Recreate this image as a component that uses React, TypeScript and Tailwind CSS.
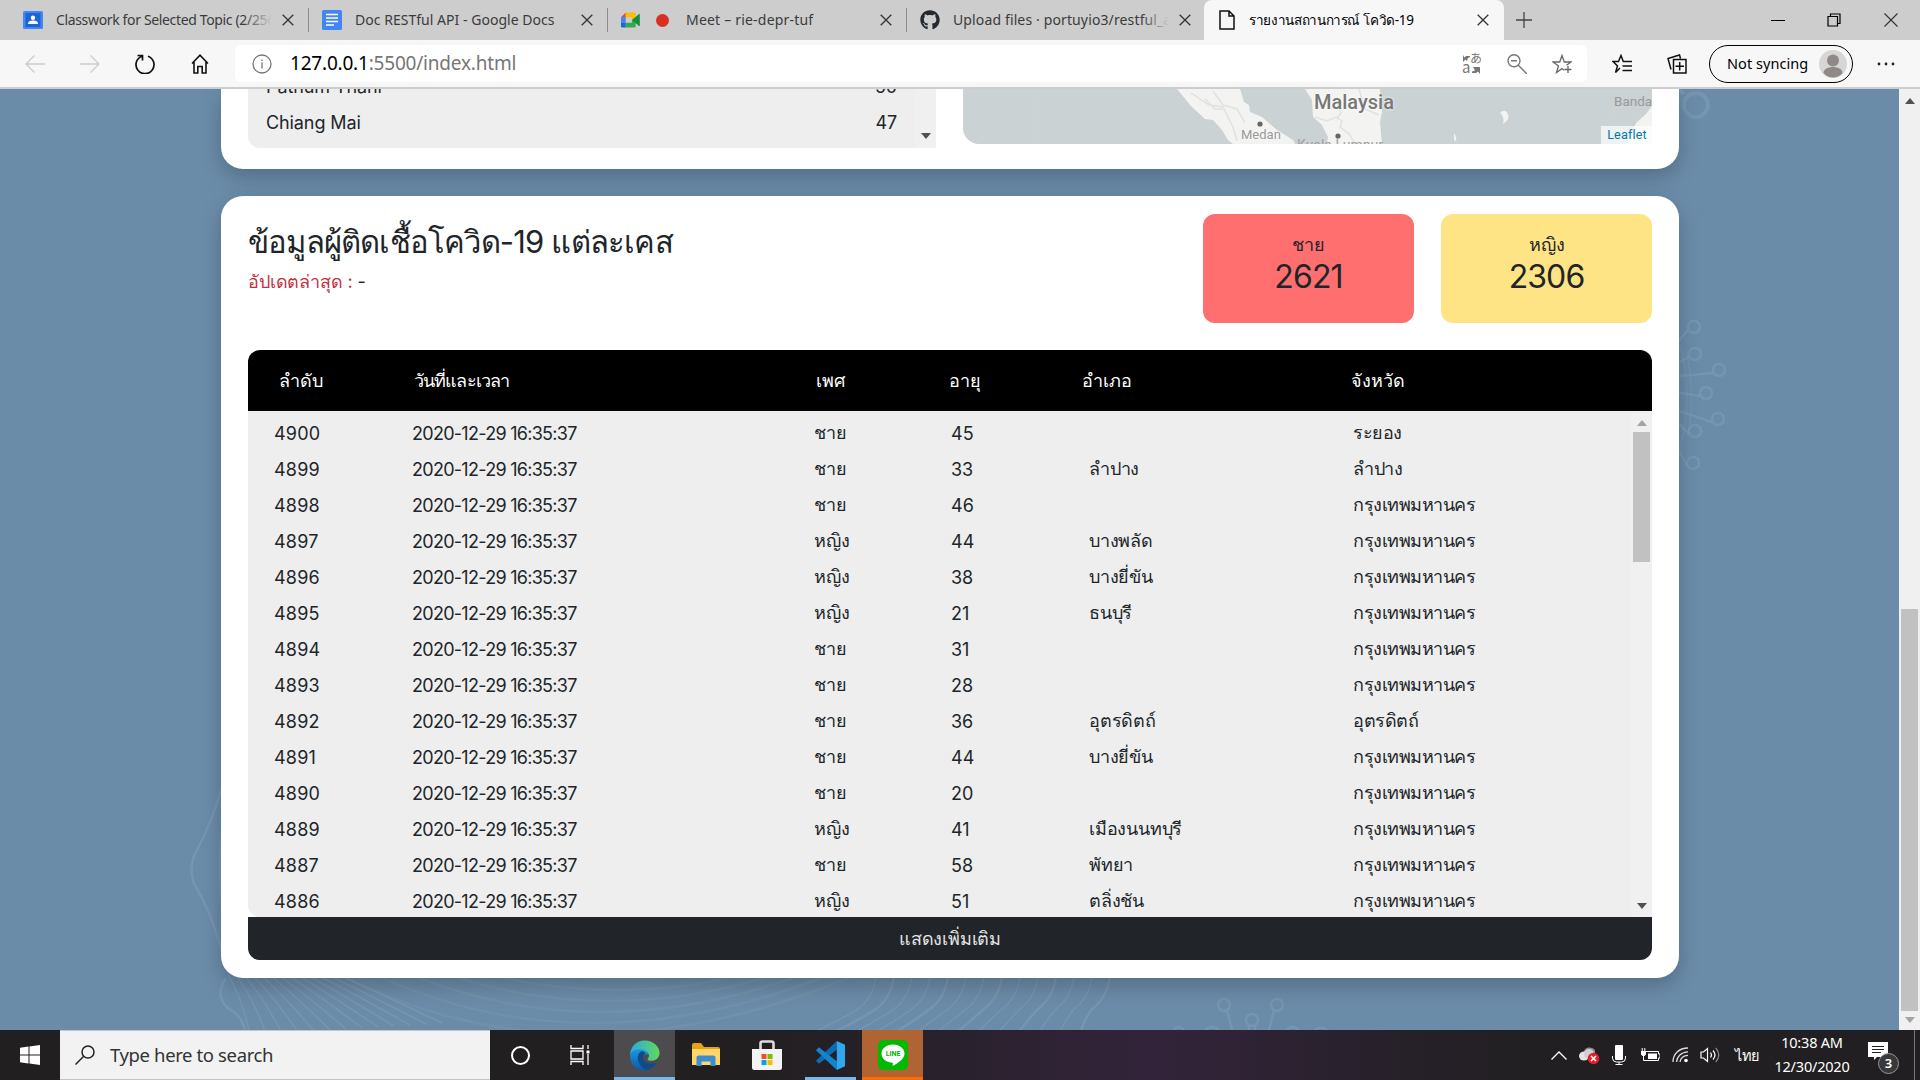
import React from "react";
import { FaGithub } from "react-icons/fa";

const ui = "font-['Noto_Sans','Open_Sans',sans-serif]";
const body = "font-['Inter','Noto_Sans',sans-serif]";

const rows: string[][] = [
  ["4900", "ชาย", "45", "", "ระยอง"],
  ["4899", "ชาย", "33", "ลำปาง", "ลำปาง"],
  ["4898", "ชาย", "46", "", "กรุงเทพมหานคร"],
  ["4897", "หญิง", "44", "บางพลัด", "กรุงเทพมหานคร"],
  ["4896", "หญิง", "38", "บางยี่ขัน", "กรุงเทพมหานคร"],
  ["4895", "หญิง", "21", "ธนบุรี", "กรุงเทพมหานคร"],
  ["4894", "ชาย", "31", "", "กรุงเทพมหานคร"],
  ["4893", "ชาย", "28", "", "กรุงเทพมหานคร"],
  ["4892", "ชาย", "36", "อุตรดิตถ์", "อุตรดิตถ์"],
  ["4891", "ชาย", "44", "บางยี่ขัน", "กรุงเทพมหานคร"],
  ["4890", "ชาย", "20", "", "กรุงเทพมหานคร"],
  ["4889", "หญิง", "41", "เมืองนนทบุรี", "กรุงเทพมหานคร"],
  ["4887", "ชาย", "58", "พัทยา", "กรุงเทพมหานคร"],
  ["4886", "หญิง", "51", "ตลิ่งชัน", "กรุงเทพมหานคร"],
];

function Cross({ className = "" }: { className?: string }) {
  return (
    <svg viewBox="0 0 12 12" className={"h-3 w-3 shrink-0 " + className} fill="none" stroke="#333" strokeWidth="1.3">
      <path d="M.7.7l10.6 10.6M11.3.7L.7 11.3" />
    </svg>
  );
}

function Arrow({ up = false, color = "#505050" }: { up?: boolean; color?: string }) {
  return (
    <svg viewBox="0 0 10 6" className="h-1.5 w-2.5 shrink-0" fill={color}>
      <path d={up ? "M0 6L5 0l5 6z" : "M0 0h10L5 6z"} />
    </svg>
  );
}

interface TabProps {
  icon: React.ReactNode;
  title: string;
  last?: boolean;
  fade?: boolean;
  width?: string;
  textClass: string;
}

function Tab({ icon, title, last = false, fade = false, width = "w-[299px] pl-[13px]", textClass }: TabProps) {
  return (
    <div className={"flex h-full shrink-0 items-center " + width}>
      <div className="flex items-center">{icon}</div>
      <div className="relative ml-[13px] min-w-0 flex-1 overflow-hidden">
        <div className={"whitespace-nowrap text-[14px] leading-6 text-[#3b3b3b] " + textClass}>{title}</div>
        {fade && <div className="absolute inset-y-0 right-0 w-7 bg-gradient-to-r from-transparent to-[#cdcdcd]" />}
      </div>
      <Cross className="mr-3.5 ml-2.5" />
      <div className={"h-6 w-px " + (last ? "bg-transparent" : "bg-[#8b8b8b]")} />
    </div>
  );
}

function TabBar() {
  return (
    <div className="flex h-10 items-stretch bg-[#cdcdcd]">
      <Tab
        fade
        width="w-[309px] pl-[23px]"
        textClass="tracking-[-0.35px]"
        title="Classwork for Selected Topic (2/2563)"
        icon={
          <svg viewBox="0 0 20 18" className="h-[18px] w-5" preserveAspectRatio="none">
            <rect width="20" height="18" rx="1.5" fill="#4285f4" />
            <rect x="2.5" y="2" width="15" height="14" fill="#1967d2" />
            <circle cx="10" cy="6.7" r="2.2" fill="#fff" />
            <path d="M5 13c0-3 2.500-3.500 5-3.500s5 .5 5 3.500z" fill="#fff" />
          </svg>
        }
      />
      <Tab
        textClass="tracking-[0.03px]"
        title="Doc RESTful API - Google Docs"
        icon={
          <svg viewBox="0 0 20 20" className="h-5 w-5">
            <rect width="20" height="20" rx="1.5" fill="#4285f4" />
            <path d="M4 4.500h12M4 8h12M4 11.500h12M4 15h8" stroke="#fff" strokeWidth="1.7" />
          </svg>
        }
      />
      <Tab
        textClass="tracking-[0.2px]"
        title="Meet – rie-depr-tuf"
        icon={
          <div className="mr-1 flex items-center gap-4">
            <svg viewBox="0 0 20 16" className="h-4 w-[19px]">
              <path d="M0 5L5 0v5z" fill="#ea4335" />
              <path d="M5 0h9q1.500 0 1.500 1.500V6l-4 3V5H5z" fill="#fbbc04" />
              <path d="M0 5h5v6H0z" fill="#4285f4" />
              <path d="M0 11h5v5H1.500Q0 16 0 14.500z" fill="#1967d2" />
              <path d="M5 11h6.500V8l4 1.500v5q0 1.500-1.500 1.500H5z" fill="#34a853" />
              <path d="M11.500 8L19 1.800q.8-.5.8.5v11.400q0 1-.8.5z" fill="#12903c" />
            </svg>
            <div className="h-[13px] w-[13px] rounded-full bg-[#d93025]" />
          </div>
        }
      />
      <Tab
        last
        fade
        textClass="tracking-[0.13px]"
        title="Upload files · portuyio3/restful_api"
        icon={<FaGithub className="h-[20px] w-5 text-[#24292e]" />}
      />
      <div className="-ml-0.5 flex h-full w-[300px] shrink-0 items-center rounded-t-lg bg-[#f7f7f7] pr-[15px] pl-[15px]">
        <svg viewBox="0 0 16 20" className="h-5 w-4" fill="none" stroke="#111" strokeWidth="1.5">
          <path d="M1 1h9l5 5v13H1zM10 1v5h5" />
        </svg>
        <span className="ml-3.5 flex-1 whitespace-nowrap text-[13.5px] leading-6 text-black tracking-[-0.35px]">รายงานสถานการณ์ โควิด-19</span>
        <Cross />
      </div>
      <div className="flex flex-1 items-center pl-3">
        <svg viewBox="0 0 16 16" className="h-4 w-4" stroke="#444" strokeWidth="1.3">
          <path d="M8 0v16M0 8h16" />
        </svg>
      </div>
      <div className="flex items-center pr-[22px]">
        <div className="h-px w-3.5 bg-black" />
        <svg viewBox="0 0 14 14" className="ml-[42px] h-3.5 w-3.5" fill="none" stroke="#000" strokeWidth="1.2">
          <path d="M1 3.500h9.500V13H1zM3.500 3V1H13v9.500h-2" />
        </svg>
        <svg viewBox="0 0 14 14" className="ml-[43px] h-3.5 w-3.5" stroke="#333" strokeWidth="1.100">
          <path d="M.5.5l13 13M13.500.5l-13 13" />
        </svg>
      </div>
    </div>
  );
}

function Toolbar() {
  return (
    <div className="flex h-[49px] items-center border-b-2 border-[#cdcdcd] bg-[#f7f7f7]">
      <div className="flex w-[235px] shrink-0 items-center gap-[35px] pl-[25px]">
        <svg viewBox="0 0 20 18" className="h-[18px] w-5" fill="none" stroke="#ccc" strokeWidth="1.3">
          <path d="M20 9H1M9.500.5L1 9l8.500 8.500" />
        </svg>
        <svg viewBox="0 0 20 18" className="h-[18px] w-5" fill="none" stroke="#ccc" strokeWidth="1.3">
          <path d="M0 9h19M10.500.5L19 9l-8.500 8.500" />
        </svg>
        <svg viewBox="0 0 20 20" className="h-5 w-5" fill="none" stroke="#111" strokeWidth="1.700">
          <path d="M7 2.200A9 9 0 1 0 13 2.200M2.500 1.500H7.500V6.500" />
        </svg>
        <svg viewBox="0 0 18 20" className="ml-px h-5 w-[18px]" fill="none" stroke="#111" strokeWidth="1.600">
          <path d="M1 9.500L9 1.200l8 8.300M3 8v11h3.800v-6.500h4.400V19H15V8" />
        </svg>
      </div>
      <div className="flex h-[37px] w-[1352px] shrink-0 items-center rounded-md bg-white pr-[15px] pl-[17px]">
        <svg viewBox="0 0 20 20" className="h-5 w-5" fill="none" stroke="#767676" strokeWidth="1.300">
          <circle cx="10" cy="10" r="9" />
          <path d="M10 8.500V14.500M10 5.500v1.600" />
        </svg>
        <span className="ml-[18px] flex-1 -translate-y-px whitespace-nowrap text-[19px] leading-7 tracking-[-0.2px] text-[#767676]">
          <span className="text-black">127.0.0.1</span>:5500/index.html
        </span>
        <div className="flex items-center gap-[25px]">
          <div className="relative h-5 w-5 font-['Noto_Sans_CJK_JP',sans-serif] text-[#767676]">
            <span className="absolute -top-1 left-2 text-[12px] leading-4">あ</span>
            <span className="absolute top-[5px] left-0 text-[15px] leading-4">a</span>
            <svg viewBox="0 0 20 20" className="absolute inset-0 h-5 w-5" fill="#767676">
              <path d="M1 1v7l2.500-2.500L5 7l1-3 2-1V2H4L2.500 3.500z M11 13h7v7l-2-2.500-2 1.500-4 0v-1.500l3-1z" />
            </svg>
          </div>
          <svg viewBox="0 0 20 20" className="h-5 w-5" fill="none" stroke="#767676" strokeWidth="1.400">
            <circle cx="7" cy="6.800" r="6" />
            <path d="M11.300 11.300L20 20M4 6.800h6" />
          </svg>
          <svg viewBox="0 0 20 20" className="h-5 w-5" fill="none" stroke="#666" strokeWidth="1.300">
            <path d="M12 16.200l-2-1.600-5.500 3.900 2-6.500L1 8h6.700L10 1.500 12.300 8H19l-4.500 3.300M16 12v7M12.500 15.500h7" />
          </svg>
        </div>
      </div>
      <svg viewBox="0 0 20 20" className="ml-[25px] h-5 w-5" fill="none" stroke="#111" strokeWidth="1.500">
        <path d="M8 14l-4.500 4.500L5.500 12 1 7.500h5.500L9 1.500l2.300 6H20M10.500 12H20M10.500 16.500H20" />
      </svg>
      <svg viewBox="0 0 20 20" className="ml-[35px] h-5 w-5" fill="none" stroke="#111" strokeWidth="1.500">
        <path d="M4 15.500L1 4.500 12.500 1l1 3.500M6.500 5.500H19V19H6.500zM12.700 8v8.500M8.500 12.200h8.500" />
      </svg>
      <div className="ml-[22px] flex h-[38px] w-[144px] items-center justify-between rounded-full border-[1.5px] border-black pr-[5px] pl-[17px]">
        <span className="whitespace-nowrap text-[14.5px] tracking-[0.05px] text-black">Not syncing</span>
        <svg viewBox="0 0 28 28" className="h-7 w-7">
          <circle cx="14" cy="14" r="14" fill="#d8d6d4" />
          <circle cx="14" cy="10.500" r="6" fill="#8f8a87" />
          <path d="M4.500 23c0-8 19-8 19 0-5 6-14 6-19 0z" fill="#8f8a87" />
        </svg>
      </div>
      <svg viewBox="0 0 18 4" className="ml-6 h-1 w-[18px]" fill="#222">
        <circle cx="2" cy="2" r="1.400" />
        <circle cx="9" cy="2" r="1.400" />
        <circle cx="16" cy="2" r="1.400" />
      </svg>
    </div>
  );
}

const knobs = [
  [1694, 238], [1695, 265], [1719, 281], [1706, 304], [1718, 330], [1695, 342], [1693, 374],
];

function Backdrop() {
  return (
    <svg viewBox="0 0 1899 941" className="absolute inset-0 h-full w-full" fill="none" stroke="#86a3bc" strokeWidth="2.500" strokeOpacity=".4">
      <circle cx="1696" cy="16" r="12" strokeWidth="4" />
      <path d="M1684 5l-12-10" strokeWidth="4" />
      {knobs.map(([x, y]) => (
        <g key={y}>
          <circle cx={x} cy={y} r="6" />
          <path d={`M${x - 6} ${y + 3}L1672 ${y + (300 - y) * 0.35}`} />
        </g>
      ))}
      <path d="M1680 255q14 50 0 105M1686 262q10 40 2 85" strokeOpacity=".2" />
      <path d="M224 692q-12 42-30 75-5 14 0 28 16 24 30 75M224 730q-8 40 0 110" />
      <path d="M226 889q-14 22 8 34q10 8 12 24" />
      {Array.from({ length: 13 }, (_, i) => (
        <path key={i} strokeWidth="1.500" d={`M${228 + i * 7} ${886 - i}q${14 + i * 3} 22 ${22 + i * 9} 60`} />
      ))}
      {Array.from({ length: 7 }, (_, i) => (
        <path key={i} strokeOpacity=".22" d={`M${330 + i * 34} 880Q${570 + i * 12} ${1010 - i * 22} ${870 - i * 26} 880`} />
      ))}
      {Array.from({ length: 14 }, (_, i) => (
        <path key={i} strokeWidth={i % 3 ? 1.4 : 2.5} d={`M${1110 - i * 18} 886q-2 22-18 34-${10 + i} 14-${12 + i * 3} 26`} />
      ))}
      <circle cx="1224" cy="916" r="6" />
      <circle cx="1277" cy="916" r="6" />
      <circle cx="1252" cy="931" r="6" />
      <path d="M1227 922l6 22M1274 922l-6 22M1249 937v6M1255 937v6M1174 941q4-6 10 0M1205 941q8-6 14 0M1287 941q5-6 12 0M1315 941q6-5 12 0" />
    </svg>
  );
}

function MapView() {
  return (
    <div className="relative h-[55px] w-[689px] overflow-hidden rounded-bl-2xl bg-[#cad2d3] font-['Roboto',sans-serif]">
      <svg viewBox="0 0 689 55" className="absolute inset-0 h-full w-full">
        <path fill="#f3f4f2" d="M214 0h63l4 13 5 3 1 7 12 5 15 13 16 10 2 4h-62l-5-4-6-10-9-10-8-1-14-13zM342 0h75l2 23-2 10 2 22h-55l1-7-6-12-9-8-1-17z" />
        <path fill="none" stroke="#e0e2e0" strokeWidth="1.500" d="M228 4l18 12 14 2 10 20 4 14M250 2l10 14 14 4 8 14M352 28l12 4 9-4 6 4-2 6 10 8 5 9M374 14l4 10-4 6M396 0l6 20 14 6M242 10l10 10 8 0" />
        <path fill="#f3f4f2" d="M537 24q5-5 8 1 2 6-5 10 2-7-3-11zM491 44q3 4 2 8l-2-1zM689 17l-6 8-10 9-10 21h26z" />
        <path stroke="#d0d7d8" strokeWidth=".7" d="M75 0v55M651 0v34" />
        <circle cx="297" cy="35" r="2.600" fill="#666" />
        <circle cx="375" cy="47" r="2.600" fill="#666" />
      </svg>
      <span className="absolute -top-[5px] left-[351px] text-[20px] leading-9 font-medium text-[#777] [text-shadow:0_0_3px_white]">Malaysia</span>
      <span className="absolute top-[38px] left-[278px] text-[13px] leading-4 text-[#999] [text-shadow:0_0_3px_white]">Medan</span>
      <span className="absolute top-[48px] left-[334px] whitespace-nowrap text-[14px] leading-4 text-[#a0a0a0]">Kuala Lumpur</span>
      <span className="absolute top-1 left-[651px] text-[13.5px] leading-4 text-[#999]">Banda</span>
      <div className="absolute right-0 bottom-0 h-[18px] w-[51px] bg-white/70 pl-px text-center text-[12.5px] leading-[17px] tracking-[0.2px] text-[#0078a8]">Leaflet</div>
    </div>
  );
}

function TopCard() {
  return (
    <section className="flex h-20 items-start gap-[27px] rounded-b-[22px] bg-white px-[27px] shadow-[0_8px_22px_rgba(0,0,0,0.22)]">
      <div className="flex h-[59px] w-[688px] overflow-hidden rounded-bl-xl bg-[#eee]">
        <div className="flex flex-1 flex-col justify-end pr-[18px] pb-[7px] pl-[18px] text-[18px] leading-9 tracking-[-0.1px]">
          <div className="flex h-9 shrink-0 justify-between"><span>Pathum Thani</span><span>50</span></div>
          <div className="flex h-9 shrink-0 justify-between"><span>Chiang Mai</span><span>47</span></div>
        </div>
        <div className="flex w-[21px] items-end justify-center bg-[#f0f0f0] pb-[9px]"><Arrow /></div>
      </div>
      <MapView />
    </section>
  );
}

function Stat({ label, value, className }: { label: string; value: string; className: string }) {
  return (
    <div className={"flex h-[109px] w-[211px] flex-col items-center rounded-xl pt-[19px] " + className}>
      <span className="h-6 text-[18px] leading-6">{label}</span>
      <span className="text-[32px] leading-10 tracking-[-0.9px]">{value}</span>
    </div>
  );
}

function CasesCard() {
  return (
    <section className="mt-[27px] flex h-[782px] flex-col rounded-[22px] bg-white px-[27px] pt-[18px] shadow-[0_8px_22px_rgba(0,0,0,0.22)]">
      <div className="flex h-[136px] items-start">
        <div className="flex-1">
          <h1 className="h-[50px] whitespace-nowrap pt-1 text-[31px] leading-[48px] tracking-[-0.8px]">ข้อมูลผู้ติดเชื้อโควิด-19 แต่ละเคส</h1>
          <p className="text-[18px] leading-9 tracking-[-0.15px]"><span className="text-[#c5303f]">อัปเดตล่าสุด : </span>-</p>
        </div>
        <div className="flex gap-[27px]">
          <Stat label="ชาย" value="2621" className="bg-[#ff6f70]" />
          <Stat label="หญิง" value="2306" className="bg-[#ffe485]" />
        </div>
      </div>
      <div className="grid h-[61px] grid-cols-[135px_402px_133px_133px_269px_1fr] items-center rounded-t-xl bg-black pl-[31px] text-[18px] text-white">
        <span>ลำดับ</span>
        <span className="tracking-[-0.9px]">วันที่และเวลา</span>
        <span>เพศ</span>
        <span>อายุ</span>
        <span>อำเภอ</span>
        <span>จังหวัด</span>
      </div>
      <div className="flex h-[506px] overflow-hidden rounded-bl-xl bg-[#eee]">
        <div className="flex-1 pt-1 pl-[26px] text-[18px] leading-9">
          {rows.map(([id, sex, age, district, province]) => (
            <div key={id} className="grid h-9 grid-cols-[138px_402px_137px_138px_264px_1fr] whitespace-nowrap">
              <span className="translate-y-px tracking-[0.2px]">{id}</span>
              <span className="translate-y-px tracking-[-0.72px]">2020-12-29 16:35:37</span>
              <span>{sex}</span>
              <span className="translate-y-px">{age}</span>
              <span className="tracking-[-0.2px]">{district}</span>
              <span className="tracking-[-0.5px]">{province}</span>
            </div>
          ))}
        </div>
        <div className="flex w-[21px] flex-col items-center bg-[#f0f0f0] pt-[9px] pb-2">
          <Arrow up color="#a3a3a3" />
          <div className="mt-1.5 h-[130px] w-[17px] bg-[#c1c1c1]" />
          <div className="flex-1" />
          <Arrow />
        </div>
      </div>
      <button className="h-[43px] rounded-b-xl bg-[#212529] text-[18px] font-light tracking-[-0.2px] text-[#e4e4e4]">แสดงเพิ่มเติม</button>
    </section>
  );
}

function Taskbar() {
  return (
    <div className="flex h-[50px] items-stretch bg-gradient-to-r from-[#221f21] from-40% via-[#32233a] via-60% to-[#211f21] to-80% text-white">
      <div className="flex w-[60px] items-center justify-center">
        <svg viewBox="0 0 20 20" className="h-5 w-5" fill="#fff">
          <path d="M0 2.800L8.500 1.500v8H0zM9.500 1.400L20 0v9.500H9.500zM0 10.500h8.500v8L0 17.200zM9.500 10.500H20V20L9.500 18.600z" />
        </svg>
      </div>
      <div className="flex w-[430px] items-center border-y border-[#c4c4c4] bg-[#f2f2f2] pl-[15px]">
        <svg viewBox="0 0 20 20" className="h-5 w-5" fill="none" stroke="#222" strokeWidth="1.500">
          <circle cx="13" cy="7" r="6" />
          <path d="M8.700 11.300L.5 19.500" />
        </svg>
        <span className="ml-[15px] text-[18.500px] tracking-[-0.38px] text-[#333]">Type here to search</span>
      </div>
      <div className="flex w-[60px] items-center justify-center">
        <div className="h-[19px] w-[19px] rounded-full border-[2.5px] border-white" />
      </div>
      <div className="flex w-[64px] items-center justify-center pr-1">
        <svg viewBox="0 0 20 20" className="h-5 w-5" fill="none" stroke="#fff" strokeWidth="1.300">
          <path d="M1 0v3.500h12V0M1 6h12v8H1zM1 20v-3.500h12V20M18 0v4M18 9v11" />
          <path d="M18 5.500v3" strokeWidth="3" />
        </svg>
      </div>
      <div className="flex w-[61px] items-center justify-center border-b-[3px] border-[#76b9ed] bg-[#4d4b4d] pt-[3px]">
        <svg viewBox="0 0 32 32" className="h-[31px] w-[31px]">
          <defs>
            <linearGradient id="eg" x1="0" x2="1"><stop offset="0" stopColor="#2aa7e8" /><stop offset="1" stopColor="#62d957" /></linearGradient>
            <linearGradient id="eb" x1="0" x2="0" y1="0" y2="1"><stop offset="0" stopColor="#1b9de2" /><stop offset="1" stopColor="#0c59a4" /></linearGradient>
          </defs>
          <path fill="url(#eb)" d="M1 16C1 10 6 7 12 8c5 1 8 3 8 7-4-1-7 2-5 6 2 4 9 6 14 2-2 5-8 9-14 8.500C7 31 1 25 1 16z" />
          <path fill="#114a8b" d="M12 12c-5 3-4 14 6 19 5-1 9-4 11-8-6 3-12 1-14-3-1-3 0-5 2-6-1-2-3-3-5-2z" />
          <path fill="url(#eg)" d="M1 15C2 6 8 .5 16 .5c9 0 15.500 6 15.500 13 0 5-4 8-8 8-3 0-5-1-4-2.500 3-3 0-9-8-9.500C6 9.300 2 12 1 15z" />
        </svg>
      </div>
      <div className="flex w-[61px] items-center justify-center">
        <svg viewBox="0 0 28 24" className="h-6 w-7">
          <path d="M0 2q0-2 2-2h7l3 4h14q2 0 2 2v16H0z" fill="#e2a316" />
          <path d="M0 6h28v16H0z" fill="#ffd667" />
          <path d="M4.500 23V14.500q0-2 2-2h15q2 0 2 2V23h-5v-4.500h-9V23z" fill="#3d8ed0" />
        </svg>
      </div>
      <div className="flex w-[62px] items-center justify-center">
        <svg viewBox="0 0 30 30" className="h-[31px] w-[30px]">
          <path d="M8.500 10V3q0-2 2-2h9q2 0 2 2v7" fill="none" stroke="#ddd" strokeWidth="2.600" />
          <path d="M0 8.500h30V27q0 2.500-2.500 2.500h-25Q0 29.500 0 27z" fill="#f3f3f3" />
          <path d="M9.500 13.500h5v5h-5z" fill="#f25022" /><path d="M15.500 13.500h5v5h-5z" fill="#7fba00" />
          <path d="M9.500 19.500h5v5h-5z" fill="#00a4ef" /><path d="M15.500 19.500h5v5h-5z" fill="#ffb900" />
        </svg>
      </div>
      <div className="flex w-[64px] items-end justify-center">
        <div className="flex h-full w-[51px] items-center justify-center border-b-[3px] border-[#76b9ed] pt-[3px]">
          <svg viewBox="0 0 32 32" className="h-[31px] w-[31px]">
            <path d="M22.500 1v9L4 24.500 1 21.500z" fill="#0b6cb5" />
            <path d="M22.500 31v-9L4 7.500 1 10.500z" fill="#1385d0" />
            <path d="M22.500 1L31 5v22l-8.500 4z" fill="#31a8ee" />
          </svg>
        </div>
      </div>
      <div className="flex w-[61px] items-center justify-center border-b-[3px] border-[#ff6a00] bg-[#b06433] pt-[3px]">
        <svg viewBox="0 0 30 30" className="h-[30px] w-[30px]">
          <rect width="30" height="30" rx="5" fill="#00b900" />
          <path d="M15 4.500c6.500 0 11.500 4 11.500 9 0 4.500-4.500 8.500-11 12-.8.400-1 0-.9-.8l.3-2C8.500 22.500 3.500 19 3.500 13.500c0-5 5-9 11.500-9z" fill="#fff" />
          <text x="15" y="16" textAnchor="middle" fontSize="7" fontWeight="700" fontFamily="Roboto, sans-serif" fill="#00b900">LINE</text>
        </svg>
      </div>
      <div className="flex-1" />
      <div className="flex items-center">
        <svg viewBox="0 0 16 9" className="h-[9px] w-4" fill="none" stroke="#fff" strokeWidth="1.300"><path d="M.5 8.500L8 1l7.500 7.500" /></svg>
        <svg viewBox="0 0 21 19" className="ml-3 h-[19px] w-[21px]">
          <path d="M5 5a6 5 0 0 1 11-1v9H4z" fill="#8d8b8d" /><ellipse cx="5" cy="10" rx="5" ry="4.500" fill="#e4e4e4" /><ellipse cx="10" cy="8" rx="5" ry="5" fill="#d1d1d1" />
          <circle cx="14.500" cy="12.500" r="5.800" fill="#e01f2d" /><path d="M12 10l5 5M17 10l-5 5" stroke="#fff" strokeWidth="1.600" />
        </svg>
        <svg viewBox="0 0 14 20" className="ml-3 h-5 w-3.5" fill="#fff">
          <rect x="3" width="8" height="15" rx="1" /><path d="M.5 11v2q0 4 4 4h5q4 0 4-4v-2M7 17v2.500M3.500 19.500h7" fill="none" stroke="#fff" />
        </svg>
        <svg viewBox="0 0 20 14" className="ml-[14px] h-3.5 w-5" fill="#fff">
          <path d="M4 3.500h14.500V6H20v4h-1.500v2.500H7" fill="none" stroke="#fff" /><path d="M8 5.500h9v5.500H8zM1 3h5v3.500L4.500 8h-2L1 6.500z" /><path d="M2.200 0v3M4.800 0v3M3.500 8v4.500H7" stroke="#fff" fill="none" />
        </svg>
        <svg viewBox="0 0 17 16" className="ml-3 h-4 w-[17px]" fill="none" stroke="#ddd" strokeWidth="1.300">
          <path d="M1 15C1 7 7 1 16 1M4.500 15C5 9.500 9 5 16 4.800M8 15c.5-3.500 3-6.500 8-6.700" /><circle cx="14" cy="13.500" r="1.800" fill="#fff" stroke="none" />
        </svg>
        <svg viewBox="0 0 20 18" className="ml-[11px] h-[18px] w-5" fill="none" stroke="#fff" strokeWidth="1.200">
          <path d="M1 6h2.500L7.500 2.500v13L3.500 12H1zM10.500 6.500q2 2.500 0 5M13 4.500q4 4.500 0 9" /><path d="M15.800 2q6 7 0 14" stroke="#888" />
        </svg>
        <span className="ml-[15px] w-6 text-[14.5px] leading-6 tracking-[-0.5px]">ไทย</span>
        <div className="ml-[13px] w-[80px] -translate-y-px text-center text-[14.500px] leading-6 tracking-[-0.2px]">
          <div className="whitespace-nowrap">10:38 AM</div>
          <div className="whitespace-nowrap">12/30/2020</div>
        </div>
        <div className="relative ml-[16px] h-[30px] w-[31px]">
          <svg viewBox="0 0 20 18" className="absolute top-0.5 left-0 h-[18px] w-5"><path d="M0 0h20v15H9l-3 3v-3H0z" fill="#fff" /><path d="M4 4.500h12M4 7.500h12M4 10.500h9" stroke="#222" strokeWidth="1.100" /></svg>
          <div className="absolute right-0 bottom-[-4px] h-[21px] w-[21px] rounded-full border border-[#999] bg-[#3a383a] text-center text-[13px] leading-[19px] font-semibold">3</div>
        </div>
        <div className="ml-[15px] mr-[5px] h-[50px] w-px bg-[#777]" />
      </div>
    </div>
  );
}

export default function App() {
  return (
    <div className={"flex h-[1080px] w-[1920px] flex-col overflow-hidden " + ui}>
      <TabBar />
      <Toolbar />
      <div className="flex h-[941px]">
        <main className={"relative flex-1 overflow-hidden bg-[#6b8ca9] px-[221px] text-[#212529] " + body}>
          <Backdrop />
          <div className="relative w-[1458px]">
            <TopCard />
            <CasesCard />
          </div>
        </main>
        <div className="flex w-[21px] flex-col items-center bg-[#f0f0f0] pt-[9px] pb-[7px]">
          <Arrow up />
          <div className="flex-1" />
          <div className="h-[402px] w-[17px] bg-[#c1c1c1]" />
          <div className="h-1.5" />
          <Arrow color="#a3a3a3" />
        </div>
      </div>
      <Taskbar />
    </div>
  );
}
